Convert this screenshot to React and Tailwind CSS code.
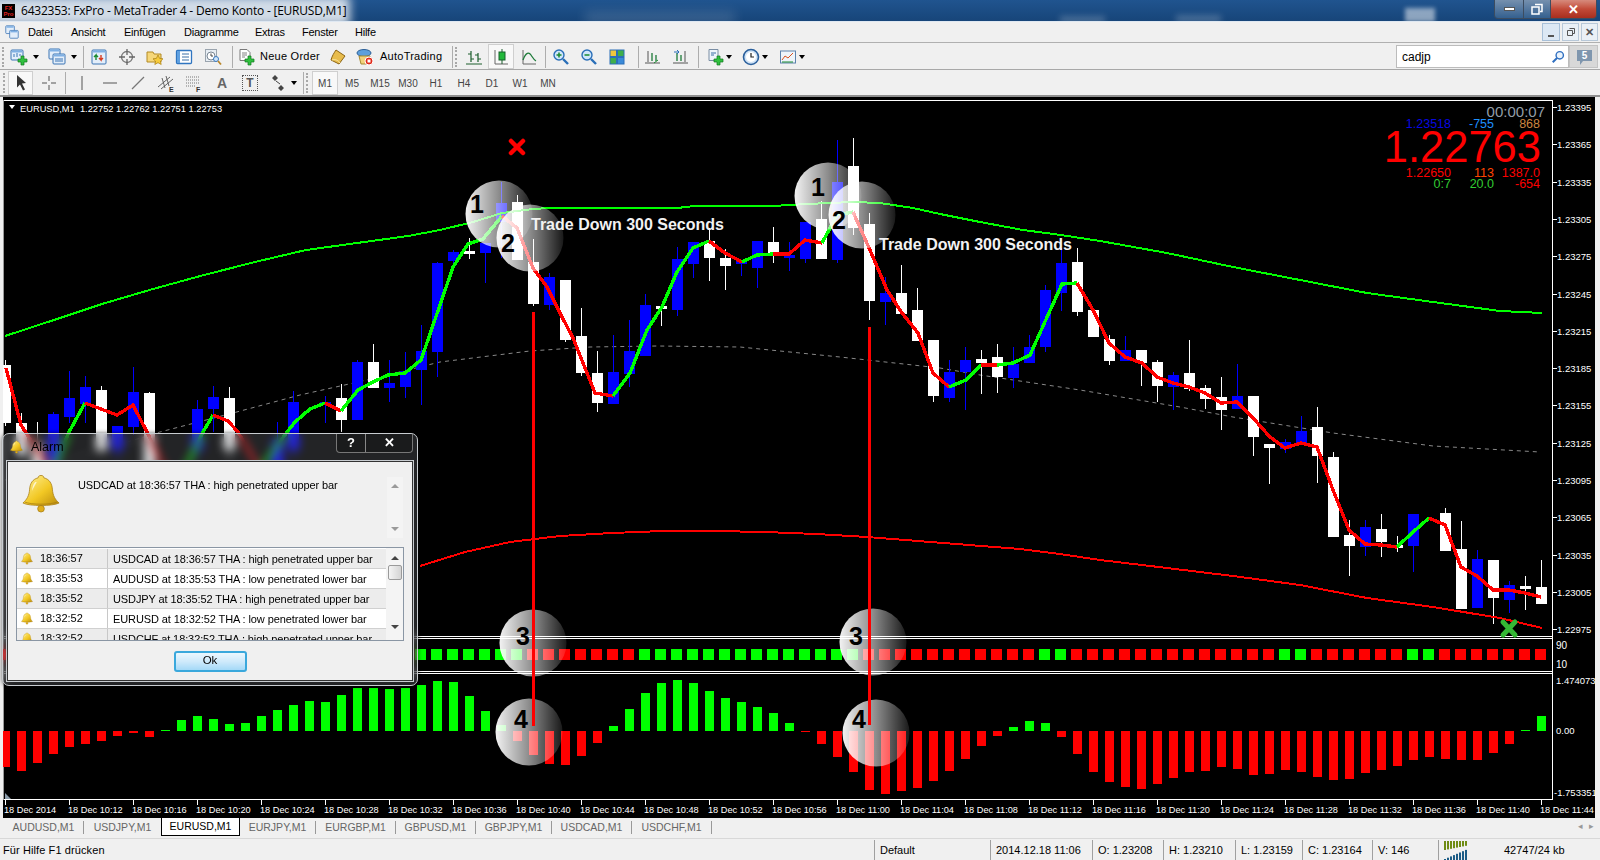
import React from 'react';

// candles: [k, colour, wickTop, bodyTop, bodyBottom, wickBottom]
const CANDLES = [
  [0,'w',360,365,423,426],[1,'w',413,423,455,460],[2,'w',422,445,470,480],[3,'b',412,414,470,480],[4,'b',371,398,417,423],
  [5,'b',376,387,404,423],[6,'w',386,390,450,455],[7,'b',426,426,450,460],[8,'b',367,392,427,435],[9,'w',392,393,470,480],
  [12,'b',400,409,450,460],[13,'b',386,397,409,432],[14,'w',387,398,450,460],[17,'b',422,440,470,480],[18,'b',391,402,450,460],
  [20,'b',396,402,405,423],[21,'w',384,398,420,432],[22,'b',360,362,420,420],[23,'w',344,362,388,388],[24,'b',360,383,388,402],
  [25,'b',352,371,387,398],[26,'b',325,351,370,405],[27,'b',262,263,352,377],[28,'b',250,252,261,270],[29,'w',238,251,254,259],
  [30,'b',243,243,253,283],[31,'b',182,203,222,258],[32,'w',195,202,260,260],[33,'w',239,262,304,306],[34,'b',273,277,305,310],
  [35,'w',280,280,340,342],[36,'w',308,336,373,376],[37,'w',351,373,403,412],[38,'b',335,372,404,404],[39,'b',320,351,374,387],
  [40,'b',294,305,356,356],[41,'w',306,306,309,326],[42,'b',247,259,310,316],[43,'b',242,242,264,278],[44,'w',228,241,258,281],
  [45,'w',249,258,266,290],[46,'b',260,260,264,276],[47,'b',241,241,268,288],[48,'w',227,242,254,263],[49,'b',242,255,258,271],
  [50,'b',222,222,259,263],[51,'w',201,219,259,259],[52,'b',140,182,260,263],[53,'w',138,166,228,235],[54,'w',213,224,301,320],
  [55,'b',277,293,302,325],[56,'w',265,293,314,314],[57,'w',288,310,341,341],[58,'w',340,340,396,402],[59,'b',360,372,398,402],
  [60,'b',347,360,372,410],[61,'w',350,359,363,394],[62,'w',344,357,377,393],[63,'b',347,364,378,388],[64,'b',335,347,363,363],
  [65,'b',285,290,347,352],[66,'b',248,263,293,311],[67,'w',248,262,312,316],[68,'w',310,310,337,337],[69,'w',335,339,361,365],
  [70,'b',336,350,361,361],[71,'w',350,350,363,386],[72,'w',360,362,386,402],[73,'b',372,375,387,410],[74,'w',340,373,389,391],
  [75,'w',385,388,399,409],[76,'w',377,397,410,430],[77,'b',364,396,409,409],[78,'w',396,396,437,456],[79,'w',444,444,448,484],
  [80,'b',439,442,449,453],[81,'b',416,431,444,444],[82,'w',407,427,456,483],[83,'w',452,457,537,537],[84,'w',520,535,546,576],
  [85,'b',520,527,547,556],[86,'w',514,529,542,557],[87,'w',536,545,548,552],[88,'b',514,514,546,572],[90,'w',508,513,551,551],
  [91,'w',521,549,609,609],[92,'b',550,559,608,608],[93,'w',560,560,598,624],[94,'b',581,585,600,613],[95,'w',576,586,589,610],
  [96,'w',560,587,604,604],
];

const SIGNAL = [
  ['#ff0000','6,368 21,425 37,450 53,470'],
  ['#00ff00','53,470 69,432 85,403'],
  ['#ff0000','85,403 117,415 133,405 147,432 165,470 181,478'],
  ['#00ff00','181,478 203,432 213,415'],
  ['#ff0000','213,415 228,421 238,432 260,470'],
  ['#00ff00','260,470 287,432 295,422 310,409 325,403'],
  ['#ff0000','325,403 341,411'],
  ['#00ff00','341,411 358,390 373,382 388,375 405,373 421,360 440,305 453,267 468,244 483,239 502,216'],
  ['#ff0000','502,216 517,228 533,268 547,287 560,313 573,338 595,393 613,396'],
  ['#00ff00','613,396 630,373 647,330 662,307 677,272 693,248 709,241'],
  ['#ff0000','709,241 725,253 742,262'],
  ['#00ff00','742,262 757,255 773,254'],
  ['#ff0000','773,254 789,254 805,240 822,243'],
  ['#00ff00','822,243 837,215 853,212'],
  ['#ff0000','853,212 870,250 887,290 902,313 918,333 933,373 949,387'],
  ['#00ff00','949,387 966,380 981,365'],
  ['#ff0000','981,365 997,365'],
  ['#00ff00','997,365 1013,363 1030,355 1062,284 1077,283'],
  ['#ff0000','1077,283 1093,310 1109,343 1125,357 1142,363 1157,377 1173,383 1189,387 1205,393 1221,403 1237,402 1253,418 1270,437 1285,448 1301,443 1317,447 1333,490 1349,530 1365,544 1381,545 1397,547'],
  ['#00ff00','1397,547 1413,532 1429,518'],
  ['#ff0000','1429,518 1445,525 1461,567 1477,576 1493,590 1509,590 1525,593 1541,597'],
];

const UPPER_MA = '5,336 54,320 102,304 153,289 204,275 255,262 306,250 357,243 408,236 440,230 473,222 502,213 533,209 550,208 647,208 677,208 695,206 773,206 807,204 853,202 880,203 913,208 940,214 980,222 1023,230 1061,235 1100,241 1167,253 1233,267 1300,280 1367,293 1433,302 1500,311 1542,313';
const LOWER_MA = '420,566 465,552 510,542 560,536 612,533 663,531 714,531 765,532 816,534 867,537 918,541 969,545 1020,549 1060,554 1100,560 1167,568 1233,576 1300,585 1367,598 1433,607 1500,618 1542,628';
const MID_MA = '5,480 160,432 233,413 300,395 367,380 440,362 530,351 590,347 657,346 740,347 840,357 940,368 980,375 1080,390 1180,407 1233,417 1333,433 1433,446 1540,452';

const HIST = [-36,-40,-32,-23,-16,-13,-10,-5,-2,-6,1,11,15,12,7,8,15,21,26,30,29,36,43,43,42,43,46,50,49,35,20,6,-10,-24,-33,-34,-25,-12,5,22,38,48,51,48,40,33,29,24,18,8,-1,-13,-26,-41,-59,-63,-60,-57,-50,-40,-28,-15,-5,4,10,8,-6,-23,-41,-51,-56,-58,-53,-47,-41,-40,-36,-38,-44,-43,-39,-41,-46,-49,-48,-42,-39,-35,-29,-26,-28,-29,-29,-22,-13,1,15];
const GREEN_SQUARES = [26,27,28,29,30,31,32,40,41,42,43,44,45,46,47,48,49,50,51,52,53,65,66,80,81,88,89];
const PRICES = ['1.23395','1.23365','1.23335','1.23305','1.23275','1.23245','1.23215','1.23185','1.23155','1.23125','1.23095','1.23065','1.23035','1.23005','1.22975'];
const TIMES = ['18 Dec 2014','18 Dec 10:12','18 Dec 10:16','18 Dec 10:20','18 Dec 10:24','18 Dec 10:28','18 Dec 10:32','18 Dec 10:36','18 Dec 10:40','18 Dec 10:44','18 Dec 10:48','18 Dec 10:52','18 Dec 10:56','18 Dec 11:00','18 Dec 11:04','18 Dec 11:08','18 Dec 11:12','18 Dec 11:16','18 Dec 11:20','18 Dec 11:24','18 Dec 11:28','18 Dec 11:32','18 Dec 11:36','18 Dec 11:40','18 Dec 11:44'];
const CIRCLES = [
  [499,214,'1',477,213],[530,238,'2',508,252],[828,196,'1',818,196],[862,215,'2',839,229],
  [533,643,'3',523,645],[873,642,'3',856,645],[529,732,'4',521,728],[876,733,'4',859,728],
];
const TABS = [['AUDUSD,M1',80],['USDJPY,M1',77],['EURUSD,M1',79],['EURJPY,M1',76],['EURGBP,M1',80],['GBPUSD,M1',80],['GBPJPY,M1',76],['USDCAD,M1',80],['USDCHF,M1',80]];
const ALERTS = [
  ['18:36:57','USDCAD at 18:36:57 THA : high penetrated upper bar'],
  ['18:35:53','AUDUSD at 18:35:53 THA : low penetrated lower bar'],
  ['18:35:52','USDJPY at 18:35:52 THA : high penetrated upper bar'],
  ['18:32:52','EURUSD at 18:32:52 THA : low penetrated lower bar'],
  ['18:32:52','USDCHF at 18:32:52 THA : high penetrated upper bar'],
];

function Chart() {
  return (
    <svg width="1592" height="721" viewBox="3 97 1592 721" className="block shrink-0">
      <defs>
        <linearGradient id="ball" x1="0" y1="0" x2="1" y2="0">
          <stop offset="0" stopColor="#fff" stopOpacity="0.95" />
          <stop offset="0.5" stopColor="#fff" stopOpacity="0.55" />
          <stop offset="1" stopColor="#fff" stopOpacity="0.1" />
        </linearGradient>
      </defs>
      <rect x="3" y="97" width="1592" height="721" fill="#000" />
      <g shapeRendering="crispEdges" fill="none" stroke="#fff">
        <path d="M4 100.5H1552.5V799.5H4" />
        <path d="M3.500 100V800" stroke="#9a9a9a" />
        <path d="M4 636.5H1552M4 638.5H1552M4 671.5H1552M4 673.5H1552" />
        {PRICES.map((p, i) => <path key={p} d={`M1553 ${Math.round(107 + i * 37.3) + 0.5}h4`} />)}
        {TIMES.map((t, i) => <path key={t} d={`M${69 + (i - 1) * 64 + 0.5} 800v5`} />)}
      </g>
      <path d="M5 799V793L11 799Z" fill="#8a9aa8" />

      {/* main window */}
      <path d="M9 105h6l-3 4z" fill="#fff" />
      <text x="20" y="112" fontSize="9.3" fill="#fff" className="whitespace-pre">EURUSD,M1  1.22752 1.22762 1.22751 1.22753</text>

      <polyline points={MID_MA} fill="none" stroke="#888" strokeWidth="1" strokeDasharray="4 4" />
      <g shapeRendering="crispEdges">
        {CANDLES.map(([k, c, wt, bt, bb, wb]) => {
          const col = c === 'w' ? '#fff' : '#0000ff';
          return (
            <g key={k} fill={col}>
              <rect x={16 * k + 5} y={wt} width="1" height={wb - wt} />
              <rect x={16 * k} y={bt} width="11" height={bb - bt} />
            </g>
          );
        })}
      </g>
      <g shapeRendering="crispEdges" fill="none">
        <polyline points={UPPER_MA} stroke="#00ff00" strokeWidth="2" />
        <polyline points={LOWER_MA} stroke="#ff0000" strokeWidth="2" />
        {SIGNAL.map(([col, pts], i) => (
          <polyline key={i} points={pts} stroke={col} strokeWidth="3.4" strokeLinejoin="round" />
        ))}
      </g>

      {/* squares and histogram */}
      <g shapeRendering="crispEdges">
        {HIST.map((_, k) => (
          <rect key={k} x={16 * k - 1} y="649" width="11" height="11" fill={GREEN_SQUARES.includes(k) ? '#00ff00' : '#ff0000'} />
        ))}
        {HIST.map((h, k) => (
          <rect key={k} x={16 * k + 1} y={h > 0 ? 731 - h : 731} width="9" height={Math.abs(h)} fill={h > 0 ? '#00ff00' : '#ff0000'} />
        ))}
      </g>

      {/* markers */}
      <path d="M511 141l12 12M523 141l-12 12" stroke="#ff0000" strokeWidth="4.5" strokeLinecap="round" />
      <path d="M1503 622l12 13M1515 622l-12 13" stroke="#35b835" strokeWidth="5" strokeLinecap="round" />

      {CIRCLES.map(([cx, cy], i) => <circle key={i} cx={cx} cy={cy} r="33.5" fill="url(#ball)" />)}
      {CIRCLES.map(([, , n, x, y], i) => (
        <text key={i} x={x} y={y} fontSize="25" fontWeight="700" fill="#000" textAnchor="middle">{n}</text>
      ))}
      <rect x="532" y="312" width="3" height="414" fill="#ff0000" />
      <rect x="868" y="327" width="3" height="398" fill="#ff0000" />
      <text x="531" y="230" fontSize="16" fontWeight="700" fill="#f2f2f2">Trade Down 300 Seconds</text>
      <text x="879" y="250" fontSize="16" fontWeight="700" fill="#f2f2f2">Trade Down 300 Seconds</text>

      {/* info block */}
      <text x="1545" y="117" fontSize="15" fill="#939ea8" textAnchor="end">00:00:07</text>
      <text x="1451" y="128" fontSize="12.5" fill="#0808e0" textAnchor="end">1.23518</text>
      <text x="1494" y="128" fontSize="12.5" fill="#1e90ff" textAnchor="end">-755</text>
      <text x="1540" y="128" fontSize="12.5" fill="#cd853f" textAnchor="end">868</text>
      <text x="1541" y="162" fontSize="43.5" fill="#ff0000" textAnchor="end">1.22763</text>
      <text x="1451" y="177" fontSize="12.5" fill="#ff0000" textAnchor="end">1.22650</text>
      <text x="1494" y="177" fontSize="12.5" fill="#ff4500" textAnchor="end">113</text>
      <text x="1540" y="177" fontSize="12.5" fill="#ff0000" textAnchor="end">1387.0</text>
      <text x="1451" y="188" fontSize="12.5" fill="#32cd32" textAnchor="end">0:7</text>
      <text x="1494" y="188" fontSize="12.5" fill="#32cd32" textAnchor="end">20.0</text>
      <text x="1540" y="188" fontSize="12.5" fill="#ff0000" textAnchor="end">-654</text>

      {/* axes */}
      <g fontSize="9.5" fill="#fff">
        {PRICES.map((p, i) => <text key={p} x="1557" y={Math.round(107 + i * 37.3) + 4}>{p}</text>)}
        <text x="1556" y="649" fontSize="10">90</text>
        <text x="1556" y="668" fontSize="10">10</text>
        <text x="1556" y="684">1.474073</text>
        <text x="1556" y="734">0.00</text>
        <text x="1554" y="796">-1.753351</text>
      </g>
      <g fontSize="9.2" fill="#fff">
        {TIMES.map((t, i) => <text key={t} x={i === 0 ? 4 : 68 + (i - 1) * 64} y="813">{t}</text>)}
      </g>
    </svg>
  );
}

function Bell({ className }) {
  return (
    <svg viewBox="0 0 40 42" className={className}>
      <defs>
        <linearGradient id="gold" x1="0" y1="0" x2="1" y2="1">
          <stop offset="0" stopColor="#fff3a0" />
          <stop offset="0.55" stopColor="#f2c824" />
          <stop offset="1" stopColor="#b98a0c" />
        </linearGradient>
      </defs>
      <circle cx="20" cy="37" r="3.5" fill="#e0ae1c" stroke="#a87c10" strokeWidth="0.8" />
      <path d="M20 2c-2 0-3 1-3 2.500-6 1.500-8.500 6-9 12-.5 7-3 11-7 14.500 6 3.500 32 3.500 38 0-4-3.500-6.500-7.500-7-14.500-.5-6-3-10.500-9-12C23 3 22 2 20 2z" fill="url(#gold)" stroke="#a87c10" strokeWidth="0.8" />
      <path d="M3 30c7 3 27 3 34 0" fill="none" stroke="#a87c10" strokeWidth="0.8" />
      <path d="M14 9c-2 2-3 5-3.500 9l5-9z" fill="#fff" opacity="0.7" />
    </svg>
  );
}

function Alarm() {
  return (
    <div className="absolute left-[2px] top-[433px] w-[416px] h-[253px] rounded-[7px] border border-[#c8ccd0] bg-[#8a9096]/25 backdrop-blur-[5px] flex flex-col shadow-[0_0_4px_rgba(0,0,0,0.6)]">
      <div className="h-[27px] shrink-0 flex items-start">
        <Bell className="w-[13px] h-[14px] ml-[7px] mt-[6px]" />
        <span className="ml-[8px] mt-[5px] text-[12.5px] leading-[16px] text-black">Alarm</span>
        <div className="ml-auto mr-[4px] flex h-[19px] rounded-b-[4px] border border-t-0 border-[#777] bg-black/25">
          <div className="w-[29px] flex items-center justify-center border-r border-[#888] text-white text-[13px] font-bold">?</div>
          <div className="w-[46px] flex items-center justify-center text-white text-[13px] font-bold">✕</div>
        </div>
      </div>
      <div className="mx-[4px] h-[220px] border border-[#333] outline outline-[#c8ccd0] bg-[#f0f0f0] flex flex-col">
        <div className="h-[85px] shrink-0 flex">
          <Bell className="w-[38px] h-[41px] ml-[14px] mt-[11px]" />
          <span className="ml-[18px] mt-[15px] text-[11px] leading-[16px] text-black tracking-[-0.1px]">USDCAD at 18:36:57 THA : high penetrated upper bar</span>
          <div className="ml-auto mr-[9px] mt-[15px] w-[16px] h-[61px] bg-[#f4f4f4] flex flex-col items-center justify-between py-[7px]">
            <div className="w-0 h-0 border-x-[4px] border-x-transparent border-b-[4px] border-b-[#9a9a9a]" />
            <div className="w-0 h-0 border-x-[4px] border-x-transparent border-t-[4px] border-t-[#9a9a9a]" />
          </div>
        </div>
        <div className="mx-[8px] h-[94px] shrink-0 border border-[#8a96a4] bg-white flex overflow-hidden">
          <div className="w-[369px] shrink-0 pt-px">
            {ALERTS.map(([time, msg], i) => (
              <div key={i} className={`h-[20px] flex items-center border-b border-[#d0d0d0] ${i % 2 === 0 ? 'bg-[#ececec]' : 'bg-white'}`}>
                <Bell className="w-[12px] h-[13px] ml-[4px]" />
                <span className="w-[67px] ml-[7px] text-[11px] text-black">{time}</span>
                <span className="h-full border-l border-[#c8c8c8] pl-[5px] text-[11px] leading-[20px] text-black tracking-[-0.1px] whitespace-nowrap">{msg}</span>
              </div>
            ))}
          </div>
          <div className="flex-1 bg-[#f4f4f4] flex flex-col items-center pt-[8px]">
            <div className="w-0 h-0 border-x-[4px] border-x-transparent border-b-[4px] border-b-[#444]" />
            <div className="mt-[5px] w-[14px] h-[15px] rounded-[2px] border border-[#9a9a9a] bg-gradient-to-r from-[#f4f4f4] to-[#d4d4d4]" />
            <div className="mt-[45px] w-0 h-0 border-x-[4px] border-x-transparent border-t-[4px] border-t-[#444]" />
          </div>
        </div>
        <div className="flex-1 flex items-center justify-center pt-[1px]">
          <div className="w-[73px] h-[21px] rounded-[3px] border-2 border-[#3aa8dc] bg-gradient-to-b from-[#ebf7fe] via-[#cfeafb] to-[#a4d9f7] flex items-center justify-center text-[11.5px] text-black">Ok</div>
        </div>
      </div>
    </div>
  );
}

const Ic = ({ children, className = 'w-[18px] h-[18px]' }) => (
  <svg viewBox="0 0 18 18" className={className}>{children}</svg>
);
const Plus = ({ x = 9, y = 9 }) => (
  <path transform={`translate(${x} ${y})`} d="M3 0h3v3h3v3H6v3H3V6H0V3h3z" fill="#31c03f" stroke="#0f7a1e" strokeWidth="0.7" />
);
const WinBox = ({ x, y, w, h }) => (
  <g>
    <rect x={x} y={y} width={w} height={h} rx="1" fill="#e3eefa" stroke="#3b74b4" />
    <path d={`M${x + 1} ${y + 1.5}h${w - 2}`} stroke="#7fb0e4" strokeWidth="2" />
  </g>
);
const Arrow = () => <div className="w-0 h-0 border-x-[3px] border-x-transparent border-t-[4px] border-t-black" />;
const Drop = ({ className = '' }) => <div className={`w-[8px] flex items-center justify-center ${className}`}><Arrow /></div>;
const Slot = ({ w, className = '', children }) => <div className={`${w} h-full shrink-0 flex items-center justify-center ${className}`}>{children}</div>;
const Sep = ({ className = '' }) => <div className={`w-px h-[22px] shrink-0 bg-[#adadad] ${className}`} />;
const Grip = ({ className = '' }) => <div className={`w-[2px] h-[20px] shrink-0 border-l-2 border-dotted border-[#a8a8a8] ${className}`} />;

const BarIcon = () => (
  <Ic><path d="M6 3v11M3 6h3M6 11h3M13 5v9M10 7h3M13 11h3M1 16h16" stroke="#1c5e2c" strokeWidth="1.2" fill="none" /></Ic>
);
const CandleIcon = () => (
  <Ic>
    <path d="M3 2v14M3 16h13" stroke="#666" fill="none" />
    <path d="M10 1v15" stroke="#1c5e2c" />
    <rect x="7" y="4" width="6" height="8" fill="#22b83a" stroke="#14602a" />
  </Ic>
);
const LineIcon = () => (
  <Ic><path d="M3 2v14h13" stroke="#666" fill="none" /><path d="M3 12c3-8 6-8 8-5s3 5 5 6" stroke="#1c7a38" strokeWidth="1.3" fill="none" /></Ic>
);
const Magnifier = ({ sign }) => (
  <Ic>
    <circle cx="7" cy="7" r="5" fill="#cfe6fb" stroke="#2a6fb8" strokeWidth="1.4" />
    <path d="M11 11l5 5" stroke="#2a6fb8" strokeWidth="2.4" />
    <path d={sign === '+' ? 'M4.500 7h5M7 4.500v5' : 'M4.500 7h5'} stroke="#1a8a2e" strokeWidth="1.5" />
  </Ic>
);

function Toolbar1() {
  return (
    <div className="h-[27px] shrink-0 flex items-center pt-px border-b border-[#a8a8a8] bg-[#f0f0f0]">
      <Slot w="w-[6px]"><Grip /></Slot>
      <Slot w="w-[26px]"><Ic><WinBox x={1} y={2} w={12} h={10} /><path d="M4 9V6M7 9V5M10 8V6" stroke="#3b74b4" /><Plus x={8} y={8} /></Ic></Slot>
      <Drop />
      <Slot w="w-[26px]" className="ml-[4px]"><Ic><WinBox x={1} y={1} w={11} h={10} /><WinBox x={5} y={6} w={12} h={10} /><path d="M7 11h8M7 13h8" stroke="#3b74b4" /></Ic></Slot>
      <Drop />
      <Sep className="ml-[5px]" />
      <Slot w="w-[28px]" className="ml-[1px]"><Ic><WinBox x={2} y={2} w={14} h={14} /><path d="M6 12V7l-2 2M6 7l2 2" stroke="#1a8a2e" strokeWidth="1.4" fill="none" /><path d="M11 7v5l-2-2M11 12l2-2" stroke="#d83a1e" strokeWidth="1.4" fill="none" /></Ic></Slot>
      <Slot w="w-[28px]"><Ic><circle cx="9" cy="9" r="5.500" fill="none" stroke="#777" strokeWidth="1.3" /><path d="M9 1v6M9 11v6M1 9h6M11 9h6" stroke="#666" strokeWidth="1.3" /></Ic></Slot>
      <Slot w="w-[28px]"><Ic><path d="M1 4h6l1 2h7v8H1z" fill="#f6d77a" stroke="#b28a24" /><path d="M12 7l1.600 3.400 3.400.4-2.500 2.300.7 3.400-3.200-1.800-3.200 1.800.7-3.400L7 10.800l3.400-.4z" fill="#f6cb3c" stroke="#a87c10" strokeWidth="0.7" /></Ic></Slot>
      <Slot w="w-[30px]"><Ic><rect x="1.500" y="2.500" width="15" height="13" rx="1" fill="#fff" stroke="#2f75c0" strokeWidth="1.3" /><rect x="2" y="3" width="3" height="12" fill="#5fa0e0" /><path d="M7 6h7M7 9h7M7 12h7" stroke="#3a6ea5" /></Ic></Slot>
      <Slot w="w-[27px]"><Ic><rect x="1.500" y="1.500" width="11" height="12" fill="#e8eef4" stroke="#9aa4ae" /><circle cx="7" cy="8" r="4" fill="#fff" stroke="#7a8794" /><path d="M7 5.500V8h2" stroke="#444" fill="none" /><circle cx="12" cy="11" r="2.500" fill="#cfe6fb" stroke="#3a7ac0" /><path d="M14 13l3 3.500" stroke="#b8862a" strokeWidth="1.800" /></Ic></Slot>
      <Sep className="ml-[6px]" />
      <Slot w="w-[18px]" className="ml-[4px]"><Ic><path d="M3 1.500h7l3 3v8H3z" fill="#fff" stroke="#7a7a7a" /><path d="M5 5h5M5 7h5M5 9h3" stroke="#666" strokeWidth="0.8" /><Plus x={8} y={8} /></Ic></Slot>
      <span className="ml-[5px] w-[60px] text-[11px] text-black whitespace-nowrap tracking-[0.25px]">Neue Order</span>
      <Slot w="w-[20px]" className="ml-[8px]"><Ic><path d="M7 2l9 6-6 8-8-4c1-4 3-7 5-10z" fill="#e8bc4c" stroke="#8c6414" /><path d="M3 12c3-1 6 0 8 3" stroke="#fbe7a4" fill="none" /></Ic></Slot>
      <Slot w="w-[20px]" className="ml-[7px]"><Ic><ellipse cx="8" cy="5" rx="7" ry="3.500" fill="#5d9fdc" stroke="#2c5f96" /><path d="M3 8h11l-2 8H5z" fill="#f2d27a" stroke="#a58a34" /><circle cx="13" cy="13" r="4" fill="#e02a1a" stroke="#fff" /><rect x="11.500" y="11.500" width="3" height="3" fill="#fff" /></Ic></Slot>
      <span className="ml-[5px] w-[63px] text-[11px] text-black whitespace-nowrap tracking-[0.25px]">AutoTrading</span>
      <Sep className="ml-[9px]" />
      <Grip className="ml-[2px]" />
      <Slot w="w-[28px]" className="ml-[3px]"><BarIcon /></Slot>
      <Slot w="w-[26px]" className="border border-[#cfcfcf] bg-[#f8f8f8]"><CandleIcon /></Slot>
      <Slot w="w-[28px]" className="ml-[1px]"><LineIcon /></Slot>
      <Sep className="ml-[2px]" />
      <Slot w="w-[28px]" className="ml-[1px]"><Magnifier sign="+" /></Slot>
      <Slot w="w-[28px]"><Magnifier sign="-" /></Slot>
      <Slot w="w-[28px]"><Ic><rect x="2" y="2" width="6.500" height="6.500" fill="#f0c63c" stroke="#2a6fb8" /><rect x="9.500" y="2" width="6.500" height="6.500" fill="#3fae4a" stroke="#2a6fb8" /><rect x="2" y="9.500" width="6.500" height="6.500" fill="#3fae4a" stroke="#2a6fb8" /><rect x="9.500" y="9.500" width="6.500" height="6.500" fill="#3a8ad8" stroke="#2a6fb8" /></Ic></Slot>
      <Sep className="ml-[7px]" />
      <Slot w="w-[27px]"><Ic><path d="M4 3v11M1 15h15" stroke="#555" fill="none" /><path d="M8 5v8M12 7v6" stroke="#1c7a38" strokeWidth="1.300" /><path d="M10 15l4-3" stroke="#1a8a2e" /></Ic></Slot>
      <Slot w="w-[30px]"><Ic><path d="M13 3v11M1 15h15" stroke="#555" fill="none" /><path d="M5 5v8M9 7v6" stroke="#1c7a38" strokeWidth="1.300" /><path d="M2 4h5l-2-2M7 4l-2 2" stroke="#2a6fb8" fill="none" /></Ic></Slot>
      <Sep className="ml-[2px]" />
      <Slot w="w-[20px]" className="ml-[6px]"><Ic><path d="M3 1.500h9v11H3z" fill="#eef4fa" stroke="#7a8ea4" /><path d="M5 5h5M5 7h3" stroke="#3a6ea5" /><Plus x={8} y={8} /></Ic></Slot>
      <Drop />
      <Slot w="w-[20px]" className="ml-[8px]"><Ic><circle cx="9" cy="9" r="7.500" fill="#cfe2f5" stroke="#2a5f9c" strokeWidth="1.600" /><circle cx="9" cy="9" r="5" fill="#fff" /><path d="M9 5v4h3" stroke="#222" strokeWidth="1.200" fill="none" /></Ic></Slot>
      <Drop />
      <Slot w="w-[20px]" className="ml-[9px]"><Ic><rect x="1.500" y="3" width="15" height="12" fill="#eef4fa" stroke="#5c82ac" /><path d="M3 12l3-4 3 2 5-5" stroke="#d8521e" fill="none" /><path d="M3 14h11" stroke="#1a8a2e" /></Ic></Slot>
      <Drop />
      <div className="ml-auto w-[173px] h-[23px] border border-[#bcbcbc] bg-white flex items-center pl-[5px] pr-[3px]">
        <span className="text-[12px] text-black">cadjp</span>
        <svg viewBox="0 0 16 16" className="ml-auto w-[14px] h-[14px]"><circle cx="10" cy="6" r="4.200" fill="#eaf3fc" stroke="#2f6fc0" strokeWidth="1.600" /><path d="M7 9l-5 5" stroke="#2f6fc0" strokeWidth="2.400" /></svg>
      </div>
      <div className="w-[29px] h-[23px] mr-[2px] bg-[#d8d8d8] border border-[#c4c4c4] flex items-center justify-center">
        <svg viewBox="0 0 20 18" className="w-[20px] h-[18px]">
          <path d="M3 2h15v11H9l-3 4v-4H3z" fill="#7f96ae" />
          <text x="10.500" y="11" fontSize="10" fontWeight="700" fill="#fff" textAnchor="middle">5</text>
        </svg>
      </div>
    </div>
  );
}

function Toolbar2() {
  return (
    <div className="h-[27px] shrink-0 flex items-center pt-px border-b-2 border-[#8f8f8f] bg-[#f0f0f0]">
      <Slot w="w-[8px]"><Grip /></Slot>
      <Slot w="w-[25px]" className="border border-[#cfcfcf] bg-[#f8f8f8]"><Ic><path d="M5 1l9 8-4 .5 3 6-2 1-3-6-3 3z" fill="#333" /></Ic></Slot>
      <Slot w="w-[32px]"><Ic><path d="M9 2v5M9 11v5M2 9h5M11 9h5" stroke="#555" /></Ic></Slot>
      <Sep />
      <Slot w="w-[28px]" className="ml-[2px]"><Ic><path d="M9 2v14" stroke="#555" /></Ic></Slot>
      <Slot w="w-[28px]"><Ic><path d="M2 9h14" stroke="#555" /></Ic></Slot>
      <Slot w="w-[28px]"><Ic><path d="M3 15L15 3" stroke="#777" strokeWidth="1.200" /></Ic></Slot>
      <Slot w="w-[28px]"><Ic><path d="M1 13L13 3M4 15L16 5M5 4l3 10M9 2l3 10" stroke="#555" fill="none" strokeWidth="0.900" /><text x="12" y="18" fontSize="7" fontWeight="700" fill="#333">E</text></Ic></Slot>
      <Slot w="w-[28px]"><Ic><path d="M1 3h13M1 6h13M1 9h13M1 12h9" stroke="#777" strokeDasharray="1 1" /><text x="11" y="18" fontSize="7" fontWeight="700" fill="#333">F</text></Ic></Slot>
      <Slot w="w-[28px]"><span className="text-[14px] font-bold text-[#666]">A</span></Slot>
      <Slot w="w-[28px]"><div className="w-[16px] h-[16px] border border-dotted border-[#555] flex items-center justify-center text-[12px] leading-none font-bold text-[#555]">T</div></Slot>
      <Slot w="w-[28px]"><Ic><path d="M3 4l3-3 3 3-3 3zM9 14l3-3 3 3-3 3z" fill="#444" /><path d="M7 7l4 3" stroke="#444" /></Ic></Slot>
      <Drop className="-ml-[2px]" />
      <Sep className="ml-[5px]" />
      <Grip className="ml-[2px]" />
      <div className="ml-[4px] w-[26px] h-full shrink-0 border border-[#cfcfcf] bg-[#f8f8f8] flex items-center justify-center text-[10px] text-[#444]">M1</div>
      {['M5', 'M15', 'M30', 'H1', 'H4', 'D1', 'W1', 'MN'].map(p => (
        <div key={p} className="w-[28px] shrink-0 text-center text-[10px] text-[#444]">{p}</div>
      ))}
    </div>
  );
}

function TitleBar() {
  return (
    <div className="relative h-[22px] shrink-0 overflow-hidden border-b border-[#dfe8f2] bg-gradient-to-b from-[#20548f] to-[#174579] flex items-center">
      <div className="absolute left-[-10px] top-[-4px] w-[360px] h-[30px] bg-white/80 blur-[5px]" />
      <div className="absolute left-[585px] top-[12px] w-[150px] h-[12px] bg-white/15 blur-[6px]" />
      <div className="absolute left-[1060px] top-[16px] w-[45px] h-[8px] bg-white/20 blur-[3px]" />
      <div className="absolute left-[1176px] top-[15px] w-[45px] h-[8px] bg-white/20 blur-[3px]" />
      <div className="absolute left-[1405px] top-[8px] w-[30px] h-[14px] bg-white/50 blur-[2px]" />
      <div className="relative ml-[2px] w-[13px] h-[14px] bg-black flex flex-col items-center justify-center text-[#e02020] text-[6px] leading-[6px] font-bold">
        <span>FX</span>
        <span>Pro</span>
      </div>
      <span className="relative ml-[6px] text-[12px] text-black whitespace-nowrap font-['Open_Sans',sans-serif] tracking-[-0.22px]">6432353: FxPro - MetaTrader 4 - Demo Konto - [EURUSD,M1]</span>
      <div className="absolute right-[3px] top-0 h-[19px] w-[103px] flex rounded-b-[4px] border border-t-0 border-[#3c4c60] overflow-hidden">
        <div className="w-[29px] border-r border-[#3c4c60] bg-gradient-to-b from-[#7590ae] to-[#34608f] flex items-center justify-center"><div className="w-[11px] h-[4px] bg-white border border-[#555]" /></div>
        <div className="w-[27px] border-r border-[#3c4c60] bg-gradient-to-b from-[#7590ae] to-[#34608f] flex items-center justify-center">
          <svg viewBox="0 0 12 12" className="w-[12px] h-[12px]"><path d="M4 1.500h7v7H9M1 4h7v7H1z" fill="none" stroke="#fff" strokeWidth="1.500" /></svg>
        </div>
        <div className="flex-1 bg-gradient-to-b from-[#d68a7c] via-[#c24a38] to-[#a82e1e] flex items-center justify-center text-white text-[13px] font-bold leading-none">✕</div>
      </div>
    </div>
  );
}

function MenuBar() {
  const items = [['Datei', 'w-[43px]'], ['Ansicht', 'w-[53px]'], ['Einfügen', 'w-[60px]'], ['Diagramme', 'w-[71px]'], ['Extras', 'w-[47px]'], ['Fenster', 'w-[53px]'], ['Hilfe', 'w-[30px]']];
  return (
    <div className="h-[21px] shrink-0 flex items-center border-b border-[#b0b0b0] bg-[#f0f0f0]">
      <Ic className="ml-[5px] mr-[9px] w-[14px] h-[14px]"><WinBox x={1} y={1} w={11} h={10} /><WinBox x={6} y={7} w={11} h={10} /></Ic>
      {items.map(([m, w]) => <span key={m} className={`${w} shrink-0 text-[11px] text-black tracking-[-0.25px]`}>{m}</span>)}
      <div className="ml-auto mr-[2px] flex gap-[2px]">
        <div className="w-[18px] h-[18px] border border-[#a8c0d8] bg-[#dce8f4] flex items-end justify-center pb-[3px]"><div className="w-[6px] h-[2px] bg-[#555]" /></div>
        <div className="w-[17px] h-[18px] border border-[#b8c8d8] bg-[#eaf0f6] flex items-center justify-center">
          <svg viewBox="0 0 10 10" className="w-[10px] h-[10px]"><path d="M3.500 1.500h5v5H7M1.500 3.500h5v5h-5z" fill="none" stroke="#555" /></svg>
        </div>
        <div className="w-[17px] h-[18px] border border-[#b8c8d8] bg-[#eaf0f6] flex items-center justify-center text-[11px] leading-none font-bold text-[#555]">✕</div>
      </div>
    </div>
  );
}

function TabBar() {
  return (
    <div className="h-[20px] shrink-0 flex items-start pl-[4px] bg-[#f0f0f0]">
      {TABS.map(([t, w], i) => {
        const active = i === 2;
        return (
          <div
            key={t}
            style={{ width: w }}
            className={`h-[18px] flex items-center justify-center text-[10.5px] ${active ? 'bg-white border-x border-b border-black text-black' : 'text-[#666]'}`}
          >
            {active ? t : (
              <span className={`w-full h-[13px] leading-[13px] mt-px text-center ${i !== 1 ? 'border-r border-[#999]' : ''}`}>{t}</span>
            )}
          </div>
        );
      })}
      <span className="ml-auto mt-[2px] mr-[6px] text-[9px] text-[#999]">◂</span>
      <span className="mt-[2px] mr-[6px] text-[9px] text-[#999]">▸</span>
    </div>
  );
}

function StatusBar() {
  const cell = 'h-full shrink-0 border-l border-[#a0a0a0] pl-[5px] flex items-center';
  return (
    <div className="h-[22px] shrink-0 flex items-center pt-px border-t border-[#d8d8d8] bg-[#f0f0f0] text-[11px] text-black">
      <div className="w-[874px] pl-[3px] shrink-0 tracking-[0.1px]">Für Hilfe F1 drücken</div>
      <div className={`${cell} w-[116px]`}>Default</div>
      <div className={`${cell} w-[102px]`}>2014.12.18 11:06</div>
      <div className={`${cell} w-[71px]`}>O: 1.23208</div>
      <div className={`${cell} w-[72px]`}>H: 1.23210</div>
      <div className={`${cell} w-[67px]`}>L: 1.23159</div>
      <div className={`${cell} w-[70px]`}>C: 1.23164</div>
      <div className={`${cell} w-[66px]`}>V: 146</div>
      <div className={`${cell} flex-1`}>
        <svg viewBox="0 0 24 19" className="w-[24px] h-[19px]">
          {Array.from({ length: 8 }, (_, i) => (
            <g key={i}>
              <rect x={i * 3} y="0" width="2" height={9 - i * 0.6} fill="#6f8c14" />
              <rect x={i * 3} y={18 - i * 1.3} width="2" height={i * 1.3 + 1} fill="#1b5c86" />
            </g>
          ))}
        </svg>
        <span className="ml-[36px]">42747/24 kb</span>
      </div>
    </div>
  );
}

export default function App() {
  return (
    <div className="relative w-[1600px] h-[860px] overflow-hidden flex flex-col bg-[#f0f0f0] font-['Liberation_Sans',sans-serif]">
      <TitleBar />
      <MenuBar />
      <Toolbar1 />
      <Toolbar2 />
      <div className="h-[721px] shrink-0 flex pl-[3px] pr-[5px]">
        <Chart />
      </div>
      <TabBar />
      <StatusBar />
      <Alarm />
    </div>
  );
}
